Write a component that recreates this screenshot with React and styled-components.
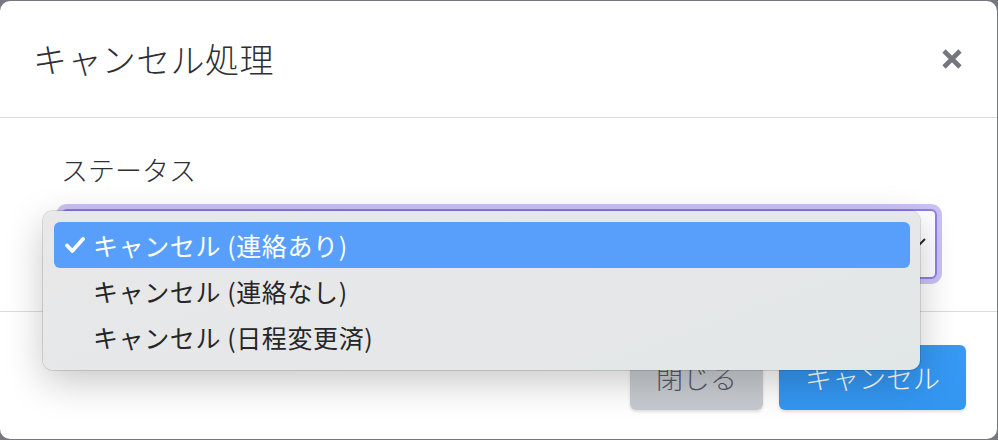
import React from "react";
import styled, { createGlobalStyle } from "styled-components";

const GlobalStyle = createGlobalStyle`
  html, body {
    margin: 0;
    padding: 0;
    background: #77777f;
  }
  body {
    font-family: "Noto Sans CJK JP", "Noto Sans", sans-serif;
  }
  * { box-sizing: border-box; }
`;

const Backdrop = styled.div`
  width: 998px;
  height: 440px;
  padding-top: 1px;
  overflow: hidden;
`;

const Modal = styled.div`
  width: 997px;
  height: 438px;
  background: #ffffff;
  border-radius: 10px;
  display: flex;
  flex-direction: column;
`;

const Header = styled.div`
  height: 117px;
  flex: none;
  display: flex;
  align-items: center;
  justify-content: space-between;
  padding: 0 34px 0 33px;
  border-bottom: 1.5px solid #dcdcdf;
`;

const Title = styled.h5`
  margin: 0;
  font-size: 34px;
  font-weight: 300;
  color: #2f2f33;
  letter-spacing: 0.4px;
  line-height: 1;
`;

const CloseButton = styled.button`
  border: 0;
  background: none;
  padding: 0;
  width: 22px;
  height: 22px;
  display: flex;
  cursor: pointer;
`;

const Body = styled.div`
  flex: none;
  padding: 32px 60px 32px 61px;
  border-bottom: 1.5px solid #dcdcdf;
`;

const Label = styled.label`
  display: block;
  font-size: 27px;
  font-weight: 300;
  line-height: 40px;
  color: #2f2f33;
  margin-bottom: 19px;
`;

const SelectWrap = styled.div`
  position: relative;
`;

const SelectBox = styled.div`
  height: 70px;
  border: 2px solid #8c7fe6;
  border-radius: 6px;
  background: #ffffff;
  box-shadow: 0 0 0 5px #cbc2f4;
  display: flex;
  align-items: center;
  justify-content: flex-end;
  padding-right: 8px;
`;

const Menu = styled.ul`
  position: absolute;
  left: -18px;
  top: 2px;
  width: 877px;
  margin: 0;
  list-style: none;
  padding: 11px 10px 10px 11px;
  border-radius: 10px;
  background: linear-gradient(160deg, #e8e8e9 0%, #e6e7e8 60%, #e1e7e7 100%);
  box-shadow: 0 0 0 1px rgba(0, 0, 0, 0.12), 0 12px 38px rgba(0, 0, 0, 0.22);
`;

const Item = styled.li`
  height: 46px;
  display: flex;
  align-items: center;
  border-radius: 6px;
  font-size: 25px;
  letter-spacing: 0.6px;
  color: ${(p) => (p.$selected ? "#ffffff" : "#262628")};
  background: ${(p) => (p.$selected ? "#579ffb" : "transparent")};
`;

const CheckCell = styled.span`
  width: 39px;
  flex: none;
  display: flex;
  justify-content: center;
  padding-left: 3px;
`;

const Footer = styled.div`
  flex: 1;
  display: flex;
  justify-content: flex-end;
  align-items: flex-start;
  gap: 16px;
  padding: 33px 31px 0 0;
`;

const Button = styled.button`
  height: 65px;
  padding: 0 26px;
  border: 0;
  border-radius: 6px;
  font-family: inherit;
  font-size: 27px;
  font-weight: 300;
  line-height: 1;
  color: ${(p) => (p.$primary ? "#ffffff" : "#545b67")};
  background: ${(p) =>
    p.$primary
      ? "linear-gradient(180deg, #3699f4, #3396f1)"
      : "linear-gradient(180deg, #cfd2d7, #c6c9cf)"};
  box-shadow: 0 2px 3px rgba(0, 0, 0, 0.12);
`;

const CloseIcon = () => (
  <svg width="22" height="22" viewBox="0 0 22 22">
    <path d="M3 3 L19 19 M19 3 L3 19" stroke="#76767f" strokeWidth="4.6" strokeLinecap="butt" />
  </svg>
);

const Chevron = () => (
  <svg width="22" height="14" viewBox="0 0 22 14">
    <path d="M2 2 L11 11 L20 2" stroke="#2a2a2a" strokeWidth="2" fill="none" />
  </svg>
);

const Check = () => (
  <svg width="20" height="16" viewBox="0 0 20 16">
    <path d="M2 8.5 L7.3 14 L18 2" stroke="#ffffff" strokeWidth="3.8" fill="none" strokeLinecap="round" strokeLinejoin="round" />
  </svg>
);

const options = [
  "キャンセル (連絡あり)",
  "キャンセル (連絡なし)",
  "キャンセル (日程変更済)",
];

export default function App() {
  const selected = 0;
  return (
    <>
      <GlobalStyle />
      <Backdrop>
        <Modal>
          <Header>
            <Title>キャンセル処理</Title>
            <CloseButton aria-label="閉じる">
              <CloseIcon />
            </CloseButton>
          </Header>
          <Body>
            <Label>ステータス</Label>
            <SelectWrap>
              <SelectBox>
                <Chevron />
              </SelectBox>
              <Menu>
                {options.map((o, i) => (
                  <Item key={o} $selected={i === selected}>
                    <CheckCell>{i === selected && <Check />}</CheckCell>
                    {o}
                  </Item>
                ))}
              </Menu>
            </SelectWrap>
          </Body>
          <Footer>
            <Button>閉じる</Button>
            <Button $primary>キャンセル</Button>
          </Footer>
        </Modal>
      </Backdrop>
    </>
  );
}
